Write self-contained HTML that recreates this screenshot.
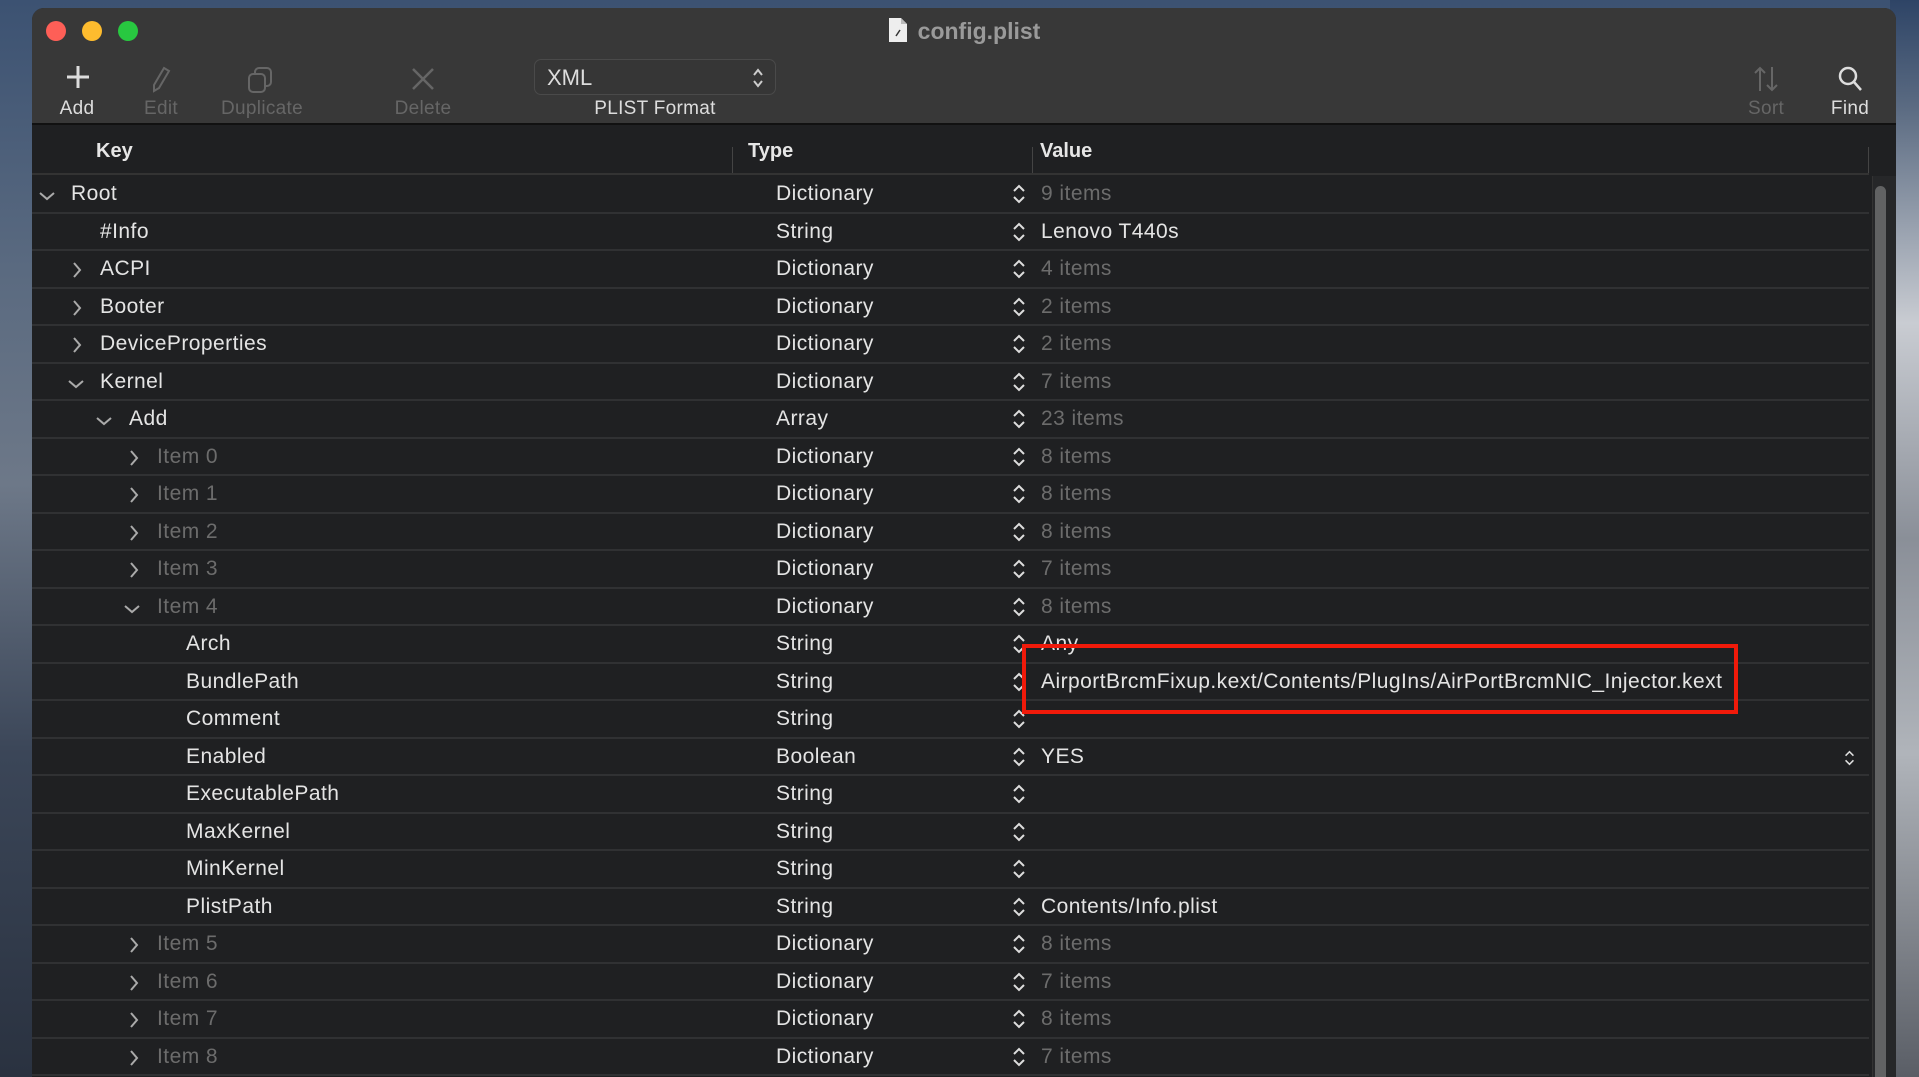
<!DOCTYPE html>
<html style="overflow:hidden"><head><meta charset="utf-8"><style>
*{margin:0;padding:0;box-sizing:border-box}
body{width:1919px;height:1077px;overflow:hidden;position:relative;font-family:"Liberation Sans",sans-serif;
background:linear-gradient(180deg,#3c5272 0%,#5a6a80 25%,#6d7888 45%,#3b4658 70%,#2a3240 100%)}
.rightwp{position:absolute;left:1890px;top:0;width:29px;height:1077px;background:linear-gradient(180deg,#2e4466 0%,#5b6b82 10%,#c9ccd2 30%,#8a8f98 50%,#b0b4ba 70%,#5a5e66 100%)}
.win{position:absolute;left:32px;top:8px;width:1864px;height:1069px;background:#1f2022;border-radius:12px 12px 0 0;overflow:hidden}
.tb{position:absolute;left:0;top:0;width:100%;height:117px;background:#383838;border-bottom:2px solid #111}
.tl{position:absolute;top:13px;width:20px;height:20px;border-radius:50%}
.title{position:absolute;top:9px;left:0;width:100%;text-align:center;font-size:23px;font-weight:bold;color:#9a9a9a}
.tool{position:absolute;top:90px;font-size:19px;color:#ddd;transform:translateX(-50%);letter-spacing:0.3px}
.dim{color:#666}
.ico{position:absolute}
.pop{position:absolute;left:502px;top:51px;width:242px;height:36px;border:1px solid #4a4a4a;border-radius:7px;background:#363636;font-size:22px;color:#ddd;padding:5px 0 0 12px}
.hdr{position:absolute;top:119px;left:0;width:1837px;height:48px;border-bottom:2px solid #333;font-size:20px;font-weight:bold;color:#e6e6e6}
.hdr span{position:absolute;top:13px}
.vd{position:absolute;top:20px;width:1px;height:26px;background:#444}
.rows{position:absolute;left:0;top:2px;width:100%;height:100%}
.row{position:absolute;left:0;width:1837px;height:37.5px;border-bottom:2px solid #303133;font-size:21px;letter-spacing:0.45px;color:#e4e4e4}
.row span{position:absolute;top:6px;white-space:nowrap}
.g{color:#6c6c6c}
.t{left:744px}
.v{left:1009px}
.st{position:absolute;left:980px;top:7px}
.ch{position:absolute;top:10px}
.sb{position:absolute;left:1840px;top:168px;width:24px;height:920px;background:#262729;border-left:1px solid #333}
.sbt{position:absolute;left:1843px;top:178px;width:11px;height:920px;background:#616263;border-radius:6px}
.red{position:absolute;left:990px;top:636px;width:716px;height:70px;border:4px solid #f01a0a}
</style></head><body>
<div class="rightwp"></div>
<div class="win">
<div class="tb">
<div class="tl" style="left:14px;background:#fe5f57"></div>
<div class="tl" style="left:50px;background:#febc2e"></div>
<div class="tl" style="left:86px;background:#28c840"></div>
<div class="title"><svg width="20" height="26" viewBox="0 0 20 26" style="vertical-align:-4px;margin-right:10px"><path d="M1 1h12l6 6v18H1z" fill="#eee"/><path d="M13 1v6h6" fill="#bbb"/><path d="M8 19l4-6" stroke="#333" stroke-width="1.5"/></svg>config.plist</div>
<svg class="ico" style="left:33px;top:56px" width="26" height="26"><path d="M13 2v22M2 13h22" stroke="#ddd" stroke-width="3"/></svg>
<svg class="ico" style="left:117px;top:57px" width="24" height="28"><path d="M15 3l5 3-10 17-5 3 0-6z" stroke="#666" stroke-width="2" fill="none"/></svg>
<svg class="ico" style="left:214px;top:57px" width="30" height="30"><rect x="9" y="3" width="16" height="18" rx="4" stroke="#666" stroke-width="2" fill="none"/><rect x="3" y="9" width="16" height="18" rx="4" stroke="#666" stroke-width="2" fill="#383838"/></svg>
<svg class="ico" style="left:378px;top:58px" width="26" height="26"><path d="M3 3l20 20M23 3L3 23" stroke="#666" stroke-width="2.5"/></svg>
<div class="tool" style="left:45px">Add</div>
<div class="tool dim" style="left:129px">Edit</div>
<div class="tool dim" style="left:230px">Duplicate</div>
<div class="tool dim" style="left:391px">Delete</div>
<div class="pop">XML<svg style="position:absolute;right:10px;top:7px" width="14" height="22"><path d="M3 8l4-5 4 5M3 14l4 5 4-5" stroke="#ccc" stroke-width="2" fill="none"/></svg></div>
<div class="tool" style="left:623px">PLIST Format</div>
<svg class="ico" style="left:1720px;top:57px" width="28" height="28"><path d="M8 26V3M3 8l5-5 5 5M20 2v23M15 20l5 5 5-5" stroke="#666" stroke-width="2" fill="none"/></svg>
<svg class="ico" style="left:1804px;top:57px" width="28" height="28"><circle cx="12" cy="11" r="8" stroke="#ddd" stroke-width="2.5" fill="none"/><path d="M18 17l7 8" stroke="#ddd" stroke-width="2.5"/></svg>
<div class="tool dim" style="left:1734px">Sort</div>
<div class="tool" style="left:1818px">Find</div>
</div>
<div class="hdr"><span style="left:64px">Key</span><div class="vd" style="left:700px"></div><span style="left:716px">Type</span><div class="vd" style="left:1000px"></div><span style="left:1008px">Value</span><div class="vd" style="left:1836px"></div></div>

<svg width="0" height="0" style="position:absolute"><defs>
<symbol id="s" viewBox="0 0 14 22"><path d="M2 8l5-5 5 5M2 14l5 5 5-5" stroke="#ddd" stroke-width="2" fill="none"/></symbol>
<symbol id="r" viewBox="0 0 14 18"><path d="M4 2l6 7-6 7" stroke="#aaa" stroke-width="2" fill="none"/></symbol>
<symbol id="d" viewBox="0 0 18 14"><path d="M2 4l7 6 7-6" stroke="#aaa" stroke-width="2" fill="none"/></symbol>
</defs></svg>

<div class="rows">
<div class="row" style="top:166px"><svg class="ch" style="left:6px;top:13px" width="18" height="14"><use href="#d"/></svg><span style="left:39px">Root</span><span class="t">Dictionary</span><svg class="st" width="14" height="22"><use href="#s"/></svg><span class="v g">9 items</span></div>
<div class="row" style="top:203.5px"><span style="left:68px">#Info</span><span class="t">String</span><svg class="st" width="14" height="22"><use href="#s"/></svg><span class="v">Lenovo T440s</span></div>
<div class="row" style="top:241px"><svg class="ch" style="left:38px" width="14" height="18"><use href="#r"/></svg><span style="left:68px">ACPI</span><span class="t">Dictionary</span><svg class="st" width="14" height="22"><use href="#s"/></svg><span class="v g">4 items</span></div>
<div class="row" style="top:278.5px"><svg class="ch" style="left:38px" width="14" height="18"><use href="#r"/></svg><span style="left:68px">Booter</span><span class="t">Dictionary</span><svg class="st" width="14" height="22"><use href="#s"/></svg><span class="v g">2 items</span></div>
<div class="row" style="top:316px"><svg class="ch" style="left:38px" width="14" height="18"><use href="#r"/></svg><span style="left:68px">DeviceProperties</span><span class="t">Dictionary</span><svg class="st" width="14" height="22"><use href="#s"/></svg><span class="v g">2 items</span></div>
<div class="row" style="top:353.5px"><svg class="ch" style="left:35px;top:13px" width="18" height="14"><use href="#d"/></svg><span style="left:68px">Kernel</span><span class="t">Dictionary</span><svg class="st" width="14" height="22"><use href="#s"/></svg><span class="v g">7 items</span></div>
<div class="row" style="top:391px"><svg class="ch" style="left:63px;top:13px" width="18" height="14"><use href="#d"/></svg><span style="left:97px">Add</span><span class="t">Array</span><svg class="st" width="14" height="22"><use href="#s"/></svg><span class="v g">23 items</span></div>
<div class="row" style="top:428.5px"><svg class="ch" style="left:95px" width="14" height="18"><use href="#r"/></svg><span class="g" style="left:125px">Item 0</span><span class="t">Dictionary</span><svg class="st" width="14" height="22"><use href="#s"/></svg><span class="v g">8 items</span></div>
<div class="row" style="top:466px"><svg class="ch" style="left:95px" width="14" height="18"><use href="#r"/></svg><span class="g" style="left:125px">Item 1</span><span class="t">Dictionary</span><svg class="st" width="14" height="22"><use href="#s"/></svg><span class="v g">8 items</span></div>
<div class="row" style="top:503.5px"><svg class="ch" style="left:95px" width="14" height="18"><use href="#r"/></svg><span class="g" style="left:125px">Item 2</span><span class="t">Dictionary</span><svg class="st" width="14" height="22"><use href="#s"/></svg><span class="v g">8 items</span></div>
<div class="row" style="top:541px"><svg class="ch" style="left:95px" width="14" height="18"><use href="#r"/></svg><span class="g" style="left:125px">Item 3</span><span class="t">Dictionary</span><svg class="st" width="14" height="22"><use href="#s"/></svg><span class="v g">7 items</span></div>
<div class="row" style="top:578.5px"><svg class="ch" style="left:91px;top:13px" width="18" height="14"><use href="#d"/></svg><span class="g" style="left:125px">Item 4</span><span class="t">Dictionary</span><svg class="st" width="14" height="22"><use href="#s"/></svg><span class="v g">8 items</span></div>
<div class="row" style="top:616px"><span style="left:154px">Arch</span><span class="t">String</span><svg class="st" width="14" height="22"><use href="#s"/></svg><span class="v">Any</span></div>
<div class="row" style="top:653.5px"><span style="left:154px">BundlePath</span><span class="t">String</span><svg class="st" width="14" height="22"><use href="#s"/></svg><span class="v">AirportBrcmFixup.kext/Contents/PlugIns/AirPortBrcmNIC_Injector.kext</span></div>
<div class="row" style="top:691px"><span style="left:154px">Comment</span><span class="t">String</span><svg class="st" width="14" height="22"><use href="#s"/></svg></div>
<div class="row" style="top:728.5px"><span style="left:154px">Enabled</span><span class="t">Boolean</span><svg class="st" width="14" height="22"><use href="#s"/></svg><span class="v">YES</span><svg class="st" style="left:1812px;top:10px" width="11" height="18"><use href="#s"/></svg></div>
<div class="row" style="top:766px"><span style="left:154px">ExecutablePath</span><span class="t">String</span><svg class="st" width="14" height="22"><use href="#s"/></svg></div>
<div class="row" style="top:803.5px"><span style="left:154px">MaxKernel</span><span class="t">String</span><svg class="st" width="14" height="22"><use href="#s"/></svg></div>
<div class="row" style="top:841px"><span style="left:154px">MinKernel</span><span class="t">String</span><svg class="st" width="14" height="22"><use href="#s"/></svg></div>
<div class="row" style="top:878.5px"><span style="left:154px">PlistPath</span><span class="t">String</span><svg class="st" width="14" height="22"><use href="#s"/></svg><span class="v">Contents/Info.plist</span></div>
<div class="row" style="top:916px"><svg class="ch" style="left:95px" width="14" height="18"><use href="#r"/></svg><span class="g" style="left:125px">Item 5</span><span class="t">Dictionary</span><svg class="st" width="14" height="22"><use href="#s"/></svg><span class="v g">8 items</span></div>
<div class="row" style="top:953.5px"><svg class="ch" style="left:95px" width="14" height="18"><use href="#r"/></svg><span class="g" style="left:125px">Item 6</span><span class="t">Dictionary</span><svg class="st" width="14" height="22"><use href="#s"/></svg><span class="v g">7 items</span></div>
<div class="row" style="top:991px"><svg class="ch" style="left:95px" width="14" height="18"><use href="#r"/></svg><span class="g" style="left:125px">Item 7</span><span class="t">Dictionary</span><svg class="st" width="14" height="22"><use href="#s"/></svg><span class="v g">8 items</span></div>
<div class="row" style="top:1028.5px"><svg class="ch" style="left:95px" width="14" height="18"><use href="#r"/></svg><span class="g" style="left:125px">Item 8</span><span class="t">Dictionary</span><svg class="st" width="14" height="22"><use href="#s"/></svg><span class="v g">7 items</span></div>
</div>

<div class="sb"></div><div class="sbt"></div>
<div class="red"></div>
</div>
</body></html>
